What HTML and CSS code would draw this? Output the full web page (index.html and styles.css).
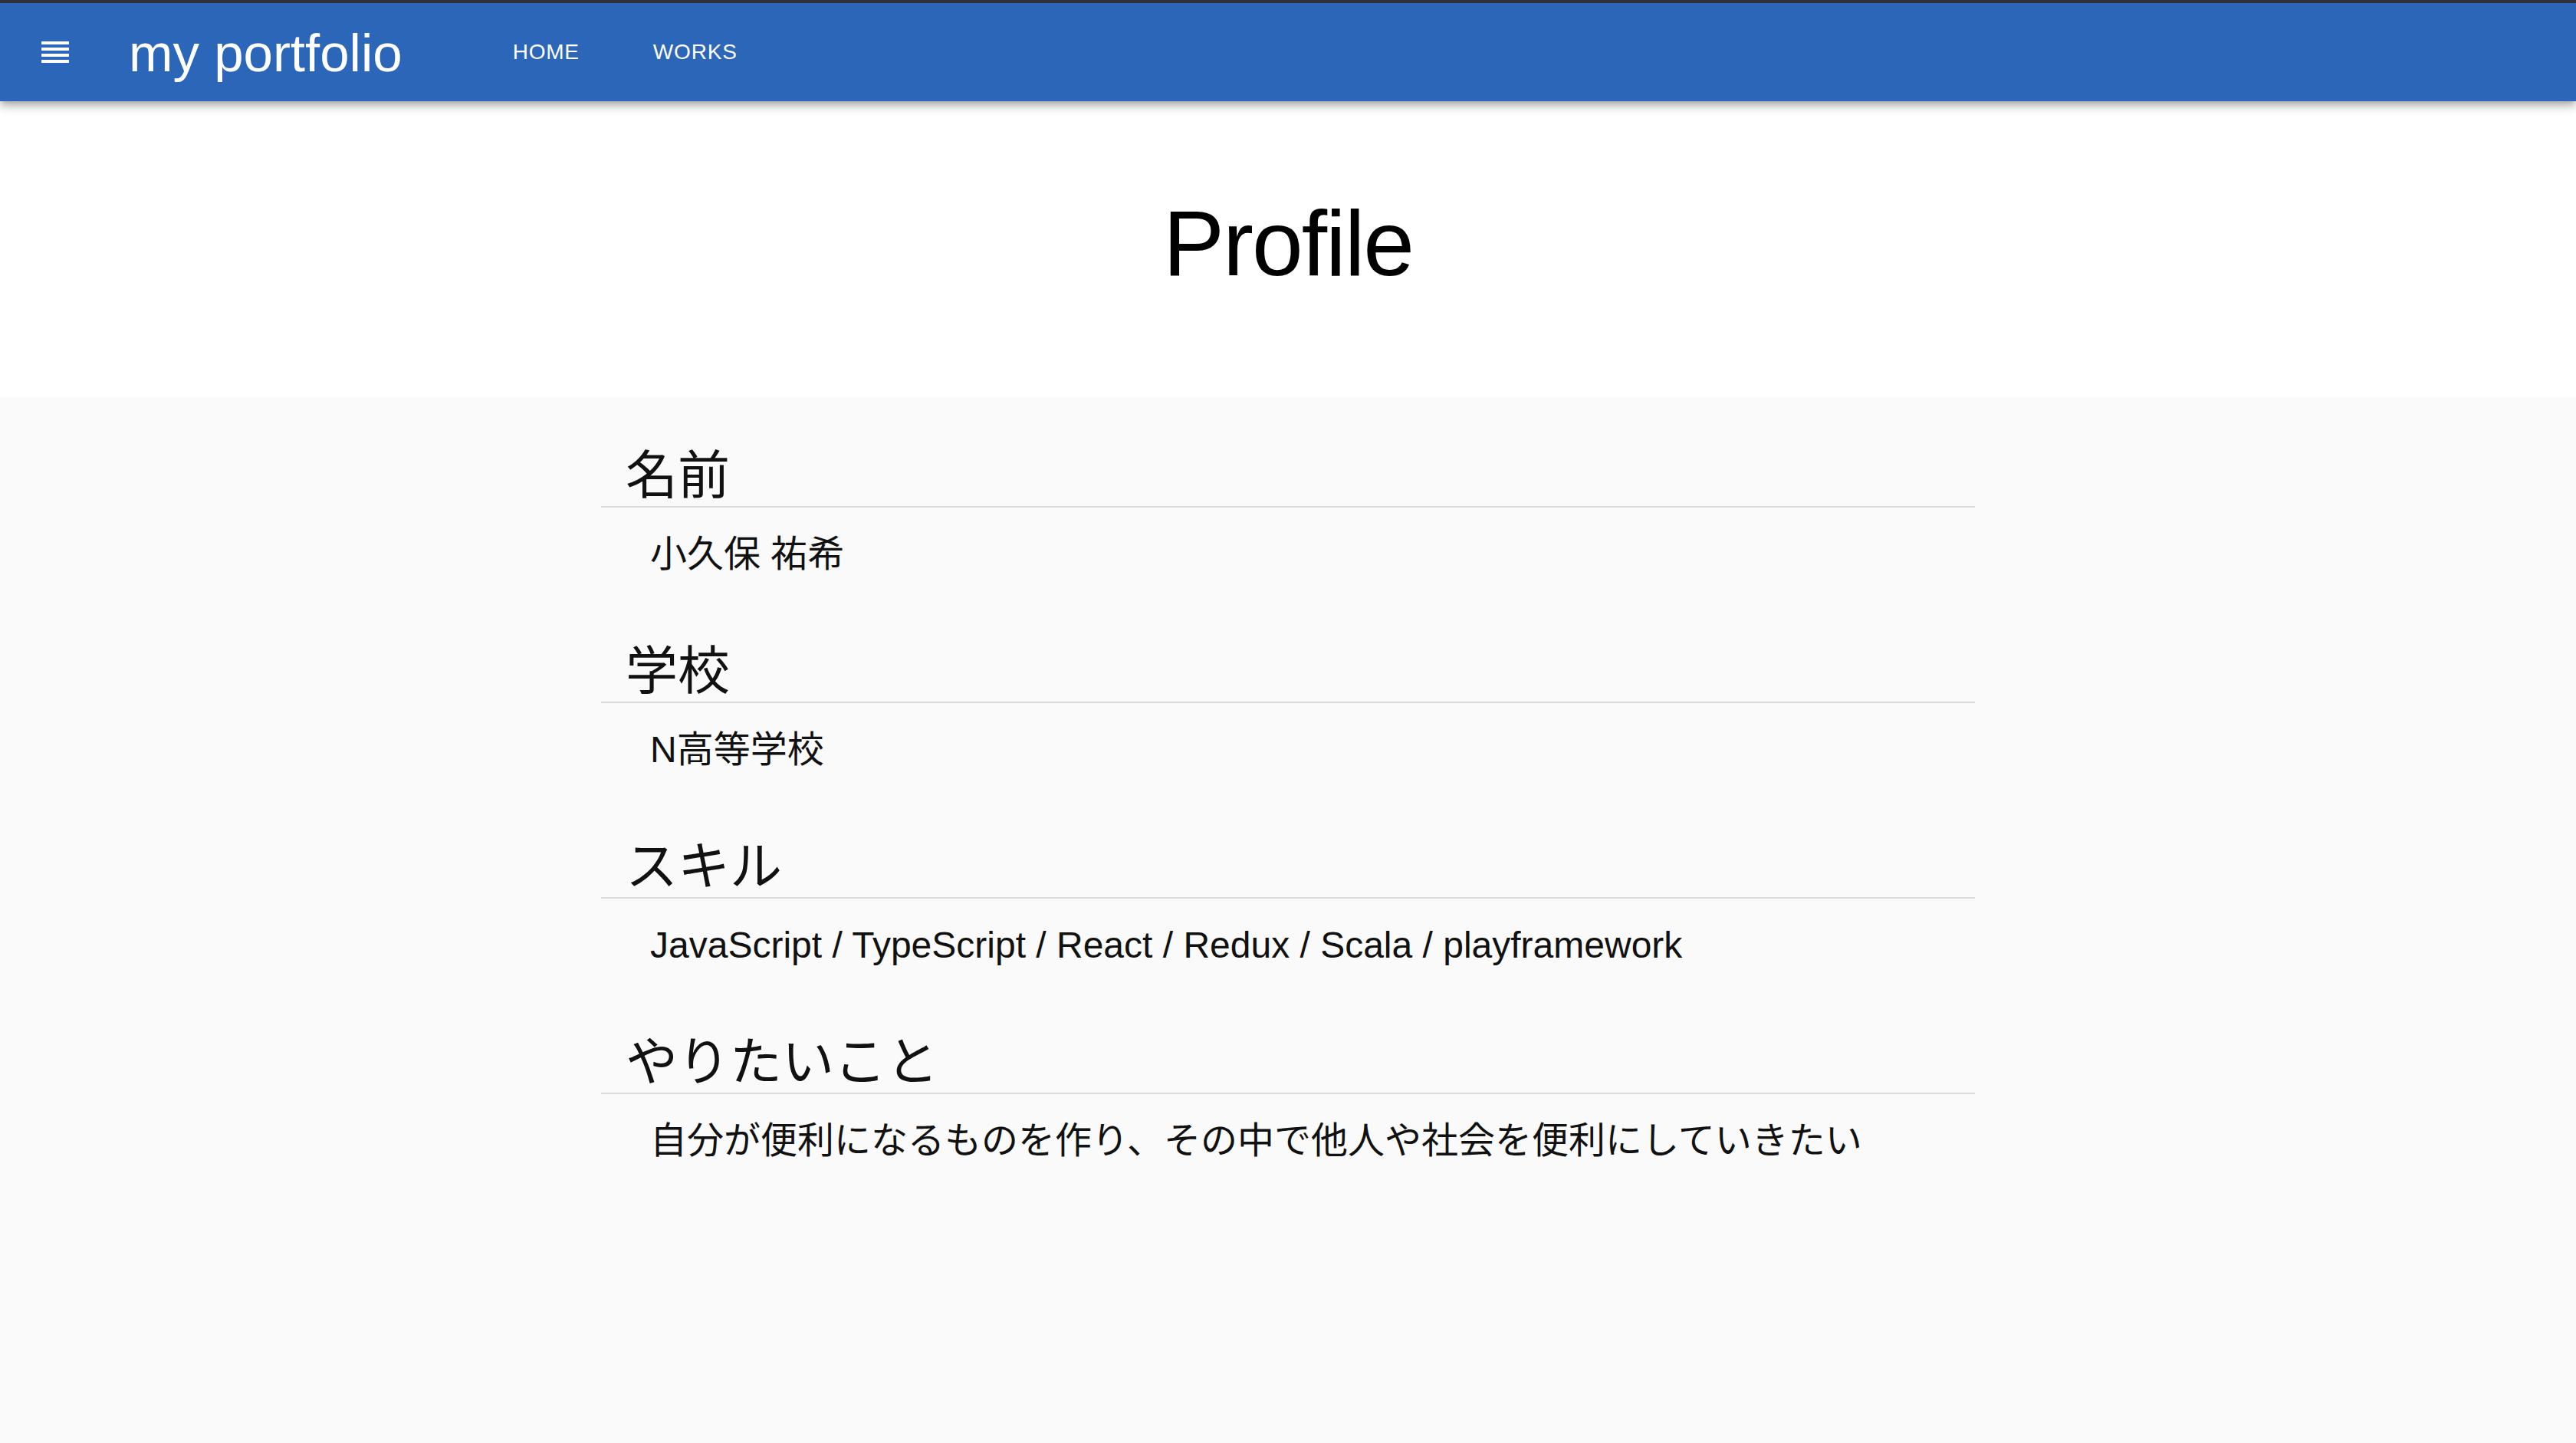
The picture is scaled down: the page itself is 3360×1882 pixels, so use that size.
FILE: index.html
```html
<!DOCTYPE html>
<html lang="ja">
<head>
<meta charset="utf-8">
<title>my portfolio</title>
<link rel="stylesheet" href="styles.css">
</head>
<body>
<header class="appbar">
  <div class="toolbar">
    <button class="icon-button" aria-label="menu">
      <svg class="icon" viewBox="0 0 24 24" width="48" height="48"><path fill="#fff" d="M3 15h18v-2H3v2zm0 4h18v-2H3v2zm0-8h18V9H3v2zm0-6v2h18V5H3z"/></svg>
    </button>
    <span class="title">my portfolio</span>
    <nav class="nav">
      <a class="nav-button" href="#">HOME</a>
      <a class="nav-button" href="#">WORKS</a>
    </nav>
  </div>
</header>
<section class="hero">
  <h1 class="hero-title">Profile</h1>
</section>
<main class="content">
  <div class="container">
    <section class="item">
      <h2 class="item-head">名前</h2>
      <p class="item-body">小久保 祐希</p>
    </section>
    <section class="item">
      <h2 class="item-head">学校</h2>
      <p class="item-body">N高等学校</p>
    </section>
    <section class="item">
      <h2 class="item-head">スキル</h2>
      <p class="item-body">JavaScript / TypeScript / React / Redux / Scala / playframework</p>
    </section>
    <section class="item">
      <h2 class="item-head">やりたいこと</h2>
      <p class="item-body">自分が便利になるものを作り、その中で他人や社会を便利にしていきたい</p>
    </section>
  </div>
</main>
</body>
</html>
```

FILE: styles.css
```css
html, body {
  margin: 0;
  padding: 0;
}
body {
  font-family: "Liberation Sans", "Noto Sans CJK JP", sans-serif;
  background: #fafafa;
  color: rgba(0, 0, 0, 0.87);
  min-height: 1882px;
}
.appbar {
  position: relative;
  z-index: 2;
  background: #2b66b9;
  border-top: 4px solid #2f3238;
  box-shadow: 0 4px 8px -2px rgba(0,0,0,0.2), 0 8px 10px 0 rgba(0,0,0,0.14), 0 2px 20px 0 rgba(0,0,0,0.12);
}
.toolbar {
  display: flex;
  align-items: center;
  height: 128px;
  padding: 0 48px;
}
.icon-button {
  display: flex;
  align-items: center;
  justify-content: center;
  width: 96px;
  height: 96px;
  padding: 0;
  margin-left: -24px;
  margin-right: 48px;
  border: 0;
  background: transparent;
}
.icon {
  display: block;
}
.title {
  color: #fff;
  font-size: 69px;
  line-height: 1.15;
  margin-right: 112px;
  position: relative;
  top: 2px;
}
.nav {
  display: flex;
  gap: 32px;
}
.nav-button {
  color: #fff;
  text-decoration: none;
  font-size: 28px;
  letter-spacing: 0.8px;
  line-height: 1.15;
  padding: 16px 32px;
}
.hero {
  background: #fff;
  height: 386px;
  box-sizing: border-box;
  padding-top: 116px;
  text-align: center;
}
.hero-title {
  margin: 0;
  font-size: 120px;
  line-height: 138px;
  font-weight: 300;
  letter-spacing: -2px;
  color: #000;
}
.content {
  background: #fafafa;
  padding-top: 62px;
}
.container {
  width: 1792px;
  margin: 0 auto;
}
.item {
  margin-bottom: 80px;
}
.item-head {
  margin: 0;
  font-size: 68px;
  line-height: 80px;
  font-weight: 400;
  padding: 0 32px;
  border-bottom: 2px solid rgba(0, 0, 0, 0.12);
  color: #111;
}
.item-body {
  margin: 29px 0 0;
  padding-left: 64px;
  font-size: 48px;
  line-height: 64px;
  color: #111;
}
```
